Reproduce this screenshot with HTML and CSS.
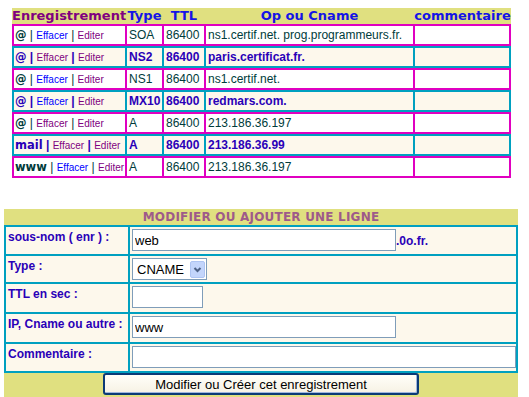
FILE: index.html
```html
<!DOCTYPE html>
<html lang="fr">
<head>
  <meta charset="UTF-8">
  <title>Zone DNS</title>
  <link rel="stylesheet" href="styles.css">
</head>
<body>
  <div class="records">
    <div class="rec-head">
      <span class="first">Enregistrement</span>
      <span>Type</span>
      <span>TTL</span>
      <span>Op ou Cname</span>
      <span>commentaire</span>
    </div>

    <table class="rec pink">
      <tr>
        <td class="c1"><b class="at">@</b> | <a class="lk" href="#">Effacer</a> | <a class="lk v" href="#">Editer</a></td>
        <td class="c2">SOA</td>
        <td class="c3">86400</td>
        <td class="c4">ns1.certif.net. prog.programmeurs.fr.</td>
        <td class="c5"></td>
      </tr>
    </table>
    <table class="rec teal">
      <tr>
        <td class="c1"><b class="at">@</b> | <a class="lk v" href="#">Effacer</a> | <a class="lk v" href="#">Editer</a></td>
        <td class="c2">NS2</td>
        <td class="c3">86400</td>
        <td class="c4">paris.certificat.fr.</td>
        <td class="c5"></td>
      </tr>
    </table>
    <table class="rec pink">
      <tr>
        <td class="c1"><b class="at">@</b> | <a class="lk" href="#">Effacer</a> | <a class="lk v" href="#">Editer</a></td>
        <td class="c2">NS1</td>
        <td class="c3">86400</td>
        <td class="c4">ns1.certif.net.</td>
        <td class="c5"></td>
      </tr>
    </table>
    <table class="rec teal">
      <tr>
        <td class="c1"><b class="at">@</b> | <a class="lk" href="#">Effacer</a> | <a class="lk v" href="#">Editer</a></td>
        <td class="c2">MX10</td>
        <td class="c3">86400</td>
        <td class="c4">redmars.com.</td>
        <td class="c5"></td>
      </tr>
    </table>
    <table class="rec pink">
      <tr>
        <td class="c1"><b class="at">@</b> | <a class="lk v" href="#">Effacer</a> | <a class="lk v" href="#">Editer</a></td>
        <td class="c2">A</td>
        <td class="c3">86400</td>
        <td class="c4">213.186.36.197</td>
        <td class="c5"></td>
      </tr>
    </table>
    <table class="rec teal">
      <tr>
        <td class="c1"><b class="at">mail</b> | <a class="lk v" href="#">Effacer</a> | <a class="lk v" href="#">Editer</a></td>
        <td class="c2">A</td>
        <td class="c3">86400</td>
        <td class="c4">213.186.36.99</td>
        <td class="c5"></td>
      </tr>
    </table>
    <table class="rec pink">
      <tr>
        <td class="c1"><b class="at">www</b> | <a class="lk" href="#">Effacer</a> | <a class="lk v" href="#">Editer</a></td>
        <td class="c2">A</td>
        <td class="c3">86400</td>
        <td class="c4">213.186.36.197</td>
        <td class="c5"></td>
      </tr>
    </table>
  </div>

  <form class="editor" onsubmit="return false">
    <div class="editor-title">MODIFIER OU AJOUTER UNE LIGNE</div>
    <table class="fields">
      <tr class="r1">
        <td class="lbl">sous-nom ( enr ) :</td>
        <td class="val"><input class="txt wide" type="text" value="web"><span class="zone">.0o.fr.</span></td>
      </tr>
      <tr class="r2">
        <td class="lbl">Type :</td>
        <td class="val">
          <span class="pick">
            <select class="sel">
              <option>CNAME</option>
              <option>A</option>
              <option>MX</option>
              <option>NS</option>
            </select>
            <svg class="pick-btn" width="15" height="17" viewBox="0 0 15 17">
              <rect x="0.5" y="0.5" width="14" height="16" rx="1.5" fill="#c3d5fb" stroke="#aec4f2"/>
              <polyline points="4.5,7 7.5,10 10.5,7" fill="none" stroke="#4d6185" stroke-width="2"/>
            </svg>
          </span>
        </td>
      </tr>
      <tr class="r3">
        <td class="lbl">TTL en sec :</td>
        <td class="val"><input class="txt short" type="text" value=""></td>
      </tr>
      <tr class="r4">
        <td class="lbl">IP, Cname ou autre :</td>
        <td class="val"><input class="txt wide" type="text" value="www"></td>
      </tr>
      <tr class="r5">
        <td class="lbl">Commentaire :</td>
        <td class="val"><input class="txt full" type="text" value=""></td>
      </tr>
    </table>
    <div class="editor-foot">
      <button class="go" type="submit">Modifier ou Créer cet enregistrement</button>
    </div>
  </form>
</body>
</html>
```

FILE: styles.css
```css
body {
  margin: 0;
  background-color: #fff;
  font-family: "Liberation Sans", Arial, sans-serif;
  font-size: 12px;
  color: #003b3b;
}

/* liste des enregistrements */
.records {
  margin: 8px 0 0 12px;
  width: 499px;
}
.rec-head {
  display: grid;
  grid-template-columns: 114px 37px 42px 209px 97px;
  height: 16px;
  line-height: 16px;
  background-color: #e0e080;
  font-family: "DejaVu Sans", Verdana, sans-serif;
  font-size: 13px;
  font-weight: bold;
  color: #1414e6;
  white-space: nowrap;
}
.rec-head span {
  text-align: center;
}
.rec-head .first {
  text-align: left;
  color: #800080;
}

.rec {
  width: 499px;
  table-layout: fixed;
  border-collapse: separate;
  border-spacing: 0;
  border: 1px solid;
}
.rec td {
  border: 1px solid;
  box-sizing: border-box;
  height: 20px;
  padding: 0 2px;
  line-height: 18px;
  white-space: nowrap;
  overflow: hidden;
}
.rec .c1 { width: 113px; padding-left: 1px; }
.rec .c2 { width: 37px; }
.rec .c3 { width: 42px; }
.rec .c4 { width: 209px; }
.rec .c5 { width: 96px; }

.rec.pink,
.rec.pink td {
  border-color: #e000c0;
}
.rec.pink {
  background-color: #fff;
}
.rec.teal,
.rec.teal td {
  border-color: #00a0c0;
}
.rec.teal {
  background-color: #fdf8ec;
}
.rec.teal td {
  font-weight: bold;
  color: #2a00b8;
}

.at {
  font-family: "DejaVu Sans", Verdana, sans-serif;
  font-size: 11.5px;
  font-weight: bold;
  line-height: 12px;
}
.lk {
  font-size: 10px;
  font-weight: normal;
  line-height: 10px;
  color: #0000ff;
  text-decoration: none;
}
.lk.v {
  color: #800080;
}

/* formulaire d'edition */
.editor {
  margin: 31px 0 0 4px;
  width: 514px;
  background-color: #e0e080;
}
.editor-title {
  height: 16px;
  line-height: 16px;
  text-align: center;
  font-family: "DejaVu Sans", Verdana, sans-serif;
  font-size: 12px;
  font-weight: bold;
  letter-spacing: 0.2px;
  color: #9e5a8a;
}
.fields {
  width: 514px;
  table-layout: fixed;
  border-collapse: separate;
  border-spacing: 0;
  border: 1px solid #00a0c0;
  background-color: #fdf8ec;
}
.fields td {
  border: 1px solid #00a0c0;
  box-sizing: border-box;
  padding: 2px;
  vertical-align: top;
}
.fields .lbl {
  width: 124px;
  line-height: 16px;
  font-weight: bold;
  color: #2a00b8;
}
.fields .r1 { height: 29px; }
.fields .r2 { height: 28px; }
.fields .r3 { height: 30px; }
.fields .r4 { height: 30px; }
.fields .r5 { height: 29px; }

.val {
  line-height: 16px;
}
.txt {
  box-sizing: border-box;
  height: 22px;
  margin: 0;
  padding: 0 2px;
  border: 1px solid #7f9db9;
  background-color: #fff;
  font-family: "Liberation Sans", Arial, sans-serif;
  font-size: 13px;
  color: #000;
  vertical-align: baseline;
}
.txt.wide { width: 264px; }
.txt.short { width: 71px; }
.txt.full { width: 384px; }

.zone {
  font-weight: bold;
  color: #2a00b8;
}

.pick {
  position: relative;
  display: inline-block;
}
.sel {
  box-sizing: border-box;
  width: 75px;
  height: 22px;
  margin: 0;
  padding: 0 0 0 4px;
  border: 1px solid #7f9db9;
  border-radius: 0;
  background-color: #fff;
  font-family: "Liberation Sans", Arial, sans-serif;
  font-size: 13px;
  color: #000;
  appearance: none;
  -webkit-appearance: none;
}
.pick-btn {
  position: absolute;
  top: 3px;
  right: 2px;
  pointer-events: none;
}

.editor-foot {
  height: 24px;
  text-align: center;
}
.go {
  box-sizing: border-box;
  width: 316px;
  height: 22px;
  margin: 0;
  padding: 0;
  border: 2px solid #0b3a76;
  border-radius: 3px;
  background: linear-gradient(#fffef9, #f6f2e4);
  box-shadow: inset -1px -1px 0 #9fb6dc;
  font-family: "Liberation Sans", Arial, sans-serif;
  font-size: 13px;
  color: #000;
  cursor: pointer;
}
```
